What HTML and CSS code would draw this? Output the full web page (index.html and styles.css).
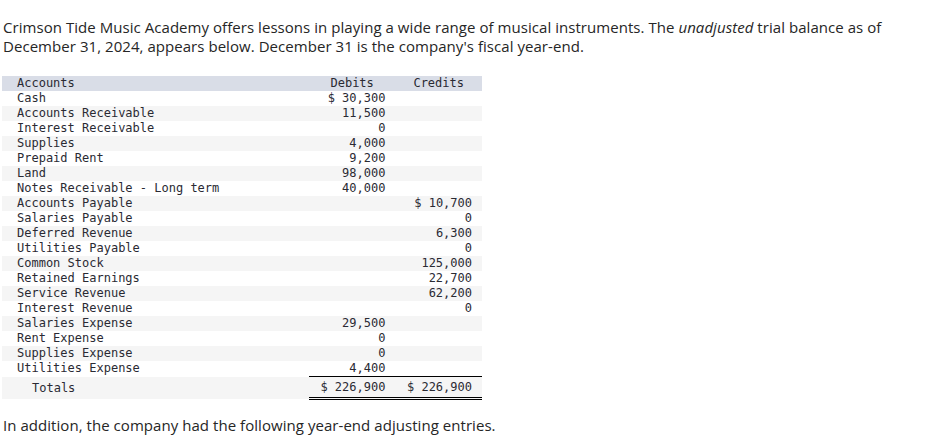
FILE: index.html
```html
<!DOCTYPE html>
<html>
<head>
<meta charset="utf-8">
<link rel="stylesheet" href="styles.css">
</head>
<body>
<p class="intro">Crimson Tide Music Academy offers lessons in playing a wide range of musical instruments. The <em>unadjusted</em> trial balance as of December 31, 2024, appears below. December 31 is the company's fiscal year-end.</p>
<table class="tb">
  <thead>
    <tr><th class="acct">Accounts</th><th class="num">Debits</th><th class="num">Credits</th></tr>
  </thead>
  <tbody>
    <tr><td class="acct">Cash</td><td class="num">$ 30,300</td><td class="num"></td></tr>
    <tr><td class="acct">Accounts Receivable</td><td class="num">11,500</td><td class="num"></td></tr>
    <tr><td class="acct">Interest Receivable</td><td class="num">0</td><td class="num"></td></tr>
    <tr><td class="acct">Supplies</td><td class="num">4,000</td><td class="num"></td></tr>
    <tr><td class="acct">Prepaid Rent</td><td class="num">9,200</td><td class="num"></td></tr>
    <tr><td class="acct">Land</td><td class="num">98,000</td><td class="num"></td></tr>
    <tr><td class="acct">Notes Receivable - Long term</td><td class="num">40,000</td><td class="num"></td></tr>
    <tr><td class="acct">Accounts Payable</td><td class="num"></td><td class="num">$ 10,700</td></tr>
    <tr><td class="acct">Salaries Payable</td><td class="num"></td><td class="num">0</td></tr>
    <tr><td class="acct">Deferred Revenue</td><td class="num"></td><td class="num">6,300</td></tr>
    <tr><td class="acct">Utilities Payable</td><td class="num"></td><td class="num">0</td></tr>
    <tr><td class="acct">Common Stock</td><td class="num"></td><td class="num">125,000</td></tr>
    <tr><td class="acct">Retained Earnings</td><td class="num"></td><td class="num">22,700</td></tr>
    <tr><td class="acct">Service Revenue</td><td class="num"></td><td class="num">62,200</td></tr>
    <tr><td class="acct">Interest Revenue</td><td class="num"></td><td class="num">0</td></tr>
    <tr><td class="acct">Salaries Expense</td><td class="num">29,500</td><td class="num"></td></tr>
    <tr><td class="acct">Rent Expense</td><td class="num">0</td><td class="num"></td></tr>
    <tr><td class="acct">Supplies Expense</td><td class="num">0</td><td class="num"></td></tr>
    <tr><td class="acct">Utilities Expense</td><td class="num">4,400</td><td class="num"></td></tr>
    <tr class="totals"><td class="acct">Totals</td><td class="num">$ 226,900</td><td class="num">$ 226,900</td></tr>
  </tbody>
</table>
<p class="outro">In addition, the company had the following year-end adjusting entries.</p>
</body>
</html>
```

FILE: styles.css
```css
html, body {
  margin: 0;
  padding: 0;
  background: #ffffff;
}
body {
  padding: 0 2px;
  font-family: "Open Sans", "Lato", sans-serif;
  font-size: 15px;
  letter-spacing: 0.05px;
  color: #262626;
}
.intro {
  margin: 18px 0 0 1px;
  line-height: 19px;
}
.intro em {
  font-style: italic;
}
.tb {
  margin-top: 20px;
  border-collapse: collapse;
  border-spacing: 0;
  width: 480px;
  font-family: "DejaVu Sans Mono", "Liberation Mono", monospace;
  font-size: 12px;
  letter-spacing: 0;
  color: #2a2a33;
}
.tb th, .tb td {
  padding: 0;
  height: 15px;
  line-height: 15px;
  font-weight: normal;
  white-space: pre;
}
.tb thead tr {
  background: #d9dde7;
}
.tb tbody tr:nth-child(even) {
  background: #f5f5f5;
}
.tb .acct {
  width: 288px;
  padding-left: 15px;
  text-align: left;
}
.tb .num {
  width: 78px;
  padding-right: 10px;
  text-align: right;
}
.tb th.num {
  text-align: center;
  padding-right: 0;
  width: 88px;
}
.tb .totals td {
  height: 20px;
  line-height: 20px;
}
.tb .totals .acct {
  padding-left: 30px;
}
.tb .totals .num {
  border-top: 1px solid #000;
  border-bottom: 3px double #000;
}
.outro {
  margin: 16px 0 0 1px;
  line-height: 19px;
}
```
